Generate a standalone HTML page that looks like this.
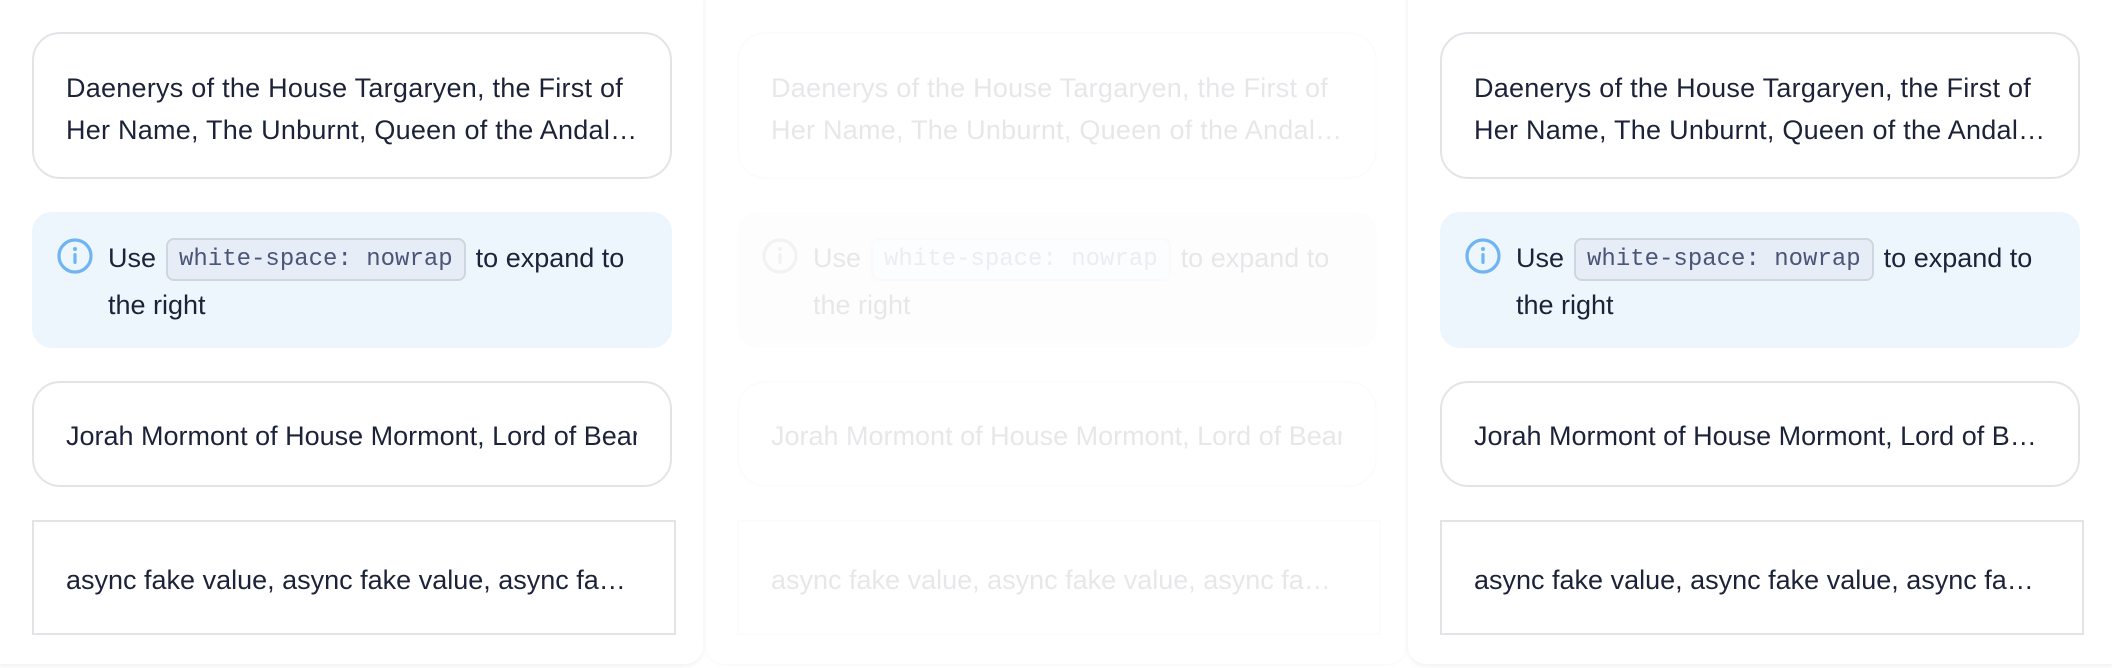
<!DOCTYPE html>
<html><head><meta charset="utf-8"><style>
*{box-sizing:border-box;margin:0;padding:0}
body{width:2112px;height:668px;background:#fff;position:relative;overflow:hidden;font-family:"Liberation Sans",sans-serif;color:#1c2238}
.panel{position:absolute;top:-20px;height:684px;background:#fff;border-radius:18px;box-shadow:0 2px 6px rgba(0,0,0,.06)}
.card{position:absolute;border:2px solid #e3e4e8;background:#fff;font-size:27px;padding-left:32px}
.r{border-radius:28px}
.l1{position:absolute;left:32px;white-space:nowrap;overflow:hidden;text-overflow:ellipsis;width:570px;line-height:42px}
.info{position:absolute;background:#edf5fd;border-radius:20px;font-size:27px}
.code{display:inline-block;font-family:"Liberation Mono","DejaVu Sans Mono",monospace;font-size:24px;color:#4a5578;background:#e6edf6;border:2px solid #cfd6e0;border-radius:8px;height:43px;line-height:39px;padding:0 11px;vertical-align:middle;margin:0 10px 0 10px}
.fade{opacity:.1}
</style></head><body>

<div class="panel" style="left:-20px;width:723px"></div>
<div class="panel" style="left:706px;width:700px;box-shadow:0 1px 3px rgba(0,0,0,.03)"></div>
<div class="panel" style="left:1408px;width:724px"></div>

<div style="position:absolute;left:0;top:0">
 <div class="card r" style="left:32px;top:32px;width:640px;height:147px"><div class="l1" style="top:33px;white-space:normal;overflow:visible;width:590px;letter-spacing:.25px">Daenerys of the House Targaryen, the First of<br>Her Name, The Unburnt, Queen of the Andal…</div></div>
 <div class="info" style="left:32px;top:212px;width:640px;height:136px">
  <svg style="position:absolute;left:24px;top:25px" width="38" height="38" viewBox="0 0 38 38"><circle cx="19" cy="19" r="16" fill="none" stroke="#6fb4f5" stroke-width="3.2"/><circle cx="19" cy="12" r="2" fill="#6fb4f5"/><rect x="17.4" y="16" width="3.2" height="11" rx="1.6" fill="#6fb4f5"/></svg>
  <div style="position:absolute;left:76px;top:23px;line-height:47px;width:560px">Use<span class="code">white-space: nowrap</span>to expand to<br>the right</div>
 </div>
 <div class="card r" style="left:32px;top:381px;width:640px;height:106px"><div class="l1" style="top:32px;text-overflow:clip;width:571px">Jorah Mormont of House Mormont, Lord of Bear Island</div></div>
 <div class="card" style="left:32px;top:520px;width:644px;height:115px"><div class="l1" style="top:37px;width:570px">async fake value, async fake value, async fake value</div></div>
</div>

<div class="fade" style="position:absolute;left:705px;top:0">
 <div class="card r" style="left:32px;top:32px;width:640px;height:147px"><div class="l1" style="top:33px;white-space:normal;overflow:visible;width:590px;letter-spacing:.25px">Daenerys of the House Targaryen, the First of<br>Her Name, The Unburnt, Queen of the Andal…</div></div>
 <div class="info" style="left:32px;top:212px;width:640px;height:136px;background:#f0f0f0">
  <svg style="position:absolute;left:24px;top:25px" width="38" height="38" viewBox="0 0 38 38"><circle cx="19" cy="19" r="16" fill="none" stroke="#888" stroke-width="3.2"/><circle cx="19" cy="12" r="2" fill="#888"/><rect x="17.4" y="16" width="3.2" height="11" rx="1.6" fill="#888"/></svg>
  <div style="position:absolute;left:76px;top:23px;line-height:47px;width:560px">Use<span class="code">white-space: nowrap</span>to expand to<br>the right</div>
 </div>
 <div class="card r" style="left:32px;top:381px;width:640px;height:106px"><div class="l1" style="top:32px;text-overflow:clip;width:571px">Jorah Mormont of House Mormont, Lord of Bear Island</div></div>
 <div class="card" style="left:32px;top:520px;width:644px;height:115px"><div class="l1" style="top:37px;width:570px">async fake value, async fake value, async fake value</div></div>
</div>

<div style="position:absolute;left:1408px;top:0">
 <div class="card r" style="left:32px;top:32px;width:640px;height:147px"><div class="l1" style="top:33px;white-space:normal;overflow:visible;width:590px;letter-spacing:.25px">Daenerys of the House Targaryen, the First of<br>Her Name, The Unburnt, Queen of the Andal…</div></div>
 <div class="info" style="left:32px;top:212px;width:640px;height:136px">
  <svg style="position:absolute;left:24px;top:25px" width="38" height="38" viewBox="0 0 38 38"><circle cx="19" cy="19" r="16" fill="none" stroke="#6fb4f5" stroke-width="3.2"/><circle cx="19" cy="12" r="2" fill="#6fb4f5"/><rect x="17.4" y="16" width="3.2" height="11" rx="1.6" fill="#6fb4f5"/></svg>
  <div style="position:absolute;left:76px;top:23px;line-height:47px;width:560px">Use<span class="code">white-space: nowrap</span>to expand to<br>the right</div>
 </div>
 <div class="card r" style="left:32px;top:381px;width:640px;height:106px"><div class="l1" style="top:32px;width:570px">Jorah Mormont of House Mormont, Lord of Bear Island</div></div>
 <div class="card" style="left:32px;top:520px;width:644px;height:115px"><div class="l1" style="top:37px;width:570px">async fake value, async fake value, async fake value</div></div>
</div>
</body></html>
